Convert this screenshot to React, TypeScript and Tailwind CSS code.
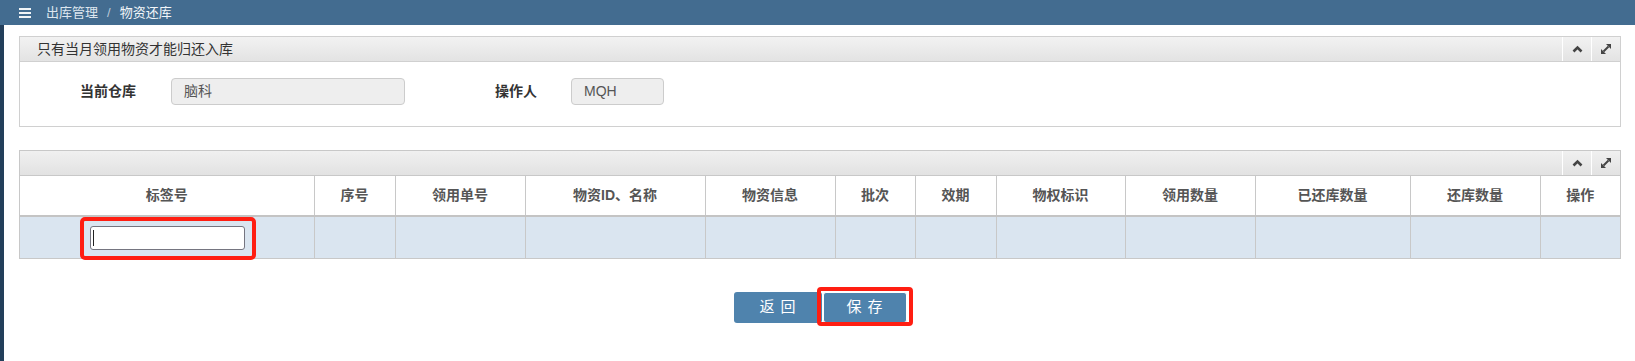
import React from "react";

const columns = [
  { title: "标签号", w: "w-[294px]" },
  { title: "序号", w: "w-[81px]" },
  { title: "领用单号", w: "w-[130px]" },
  { title: "物资ID、名称", w: "w-[180px]" },
  { title: "物资信息", w: "w-[130px]" },
  { title: "批次", w: "w-[80px]" },
  { title: "效期", w: "w-[81px]" },
  { title: "物权标识", w: "w-[129px]" },
  { title: "领用数量", w: "w-[130px]" },
  { title: "已还库数量", w: "w-[155px]" },
  { title: "还库数量", w: "w-[130px]" },
  { title: "操作", w: "w-[80px]" },
];

function PanelTools() {
  return (
    <div className="flex h-full">
      <button className="w-[29px] h-full border-l border-white flex items-center justify-center">
        <svg width="11" height="8" viewBox="0 0 11 8">
          <path d="M1.5 6.5 L5.5 2.5 L9.5 6.5" fill="none" stroke="#444" strokeWidth="2.6" />
        </svg>
      </button>
      <button className="w-[29px] h-full border-l border-white flex items-center justify-center">
        <svg width="12" height="12" viewBox="0 0 12 12">
          <path d="M3.5 8.5 L8.5 3.5" stroke="#444" strokeWidth="2" />
          <path d="M6 1 L11 1 L11 6 Z" fill="#444" />
          <path d="M1 6 L1 11 L6 11 Z" fill="#444" />
        </svg>
      </button>
    </div>
  );
}

export default function App() {
  return (
    <div className="min-h-screen w-full bg-white font-['Liberation_Sans','Noto_Sans_CJK_SC',sans-serif] text-[#333]">
      <header className="h-[25px] bg-[#436c90] flex items-center pl-[19px] text-[13px] leading-none text-[#dde6ee]">
        <div className="flex flex-col gap-[2px] w-[12px] mr-[15px]">
          <span className="h-[2px] bg-[#f0f4f7]" />
          <span className="h-[2px] bg-[#f0f4f7]" />
          <span className="h-[2px] bg-[#f0f4f7]" />
        </div>
        <span>出库管理</span>
        <span className="mx-[9px] text-[#b9c9d8]">/</span>
        <span className="text-[#f2f6f9]">物资还库</span>
      </header>

      <div className="flex min-h-[336px]">
        <div className="w-[4px] bg-[#233f5b]" />
        <main className="flex-1 pl-[15px] pr-[14px] pt-[11px]">
          {/* 提示面板 */}
          <section className="border border-[#d0d0d0]">
            <div className="h-[25px] flex items-center justify-between bg-gradient-to-b from-[#f2f2f2] to-[#e3e3e3] border-b border-[#d0d0d0]">
              <span className="pl-[17px] text-[14px] text-[#333]">只有当月领用物资才能归还入库</span>
              <PanelTools />
            </div>
            <div className="flex items-center pt-[16px] pb-[21px] pl-[60px] text-[14px]">
              <label className="font-bold w-[91px]">当前仓库</label>
              <div className="w-[234px] h-[27px] rounded-[4px] border border-[#ccc] bg-[#eee] px-[12px] flex items-center text-[#555]">
                脑科
              </div>
              <label className="font-bold ml-[90px] w-[76px]">操作人</label>
              <div className="w-[93px] h-[27px] rounded-[4px] border border-[#ccc] bg-[#eee] px-[12px] flex items-center text-[#555]">
                MQH
              </div>
            </div>
          </section>

          {/* 明细表格 */}
          <section className="mt-[23px] border border-[#c8c8c8]">
            <div className="h-[25px] flex justify-end bg-gradient-to-b from-[#f0f0f0] to-[#e2e2e2] border-b border-[#c8c8c8]">
              <PanelTools />
            </div>
            <table className="w-full table-fixed border-collapse text-[14px]">
              <colgroup>
                {columns.map((c) => (
                  <col key={c.title} className={c.w} />
                ))}
              </colgroup>
              <thead>
                <tr className="h-[40px] bg-white border-b-2 border-[#c4c4c4]">
                  {columns.map((c, i) => (
                    <th
                      key={c.title}
                      className={`font-bold text-[#555] text-center ${i > 0 ? "border-l border-[#c8c8c8]" : ""}`}
                    >
                      {c.title}
                    </th>
                  ))}
                </tr>
              </thead>
              <tbody>
                <tr className="h-[42px] bg-[#dae5f0]">
                  {columns.map((c, i) => (
                    <td key={c.title} className={i > 0 ? "border-l border-[#c8c8c8]" : ""}>
                      {i === 0 && (
                        <div className="relative ml-[70px] w-[155px] h-[24px]">
                          <input
                            className="w-full h-full rounded-[3px] border border-[#757580] bg-white outline-none"
                            defaultValue=""
                          />
                          <span className="absolute left-[3px] top-[4px] w-[1px] h-[16px] bg-[#222]" />
                          <span className="absolute -left-[10px] -right-[11px] -top-[9px] -bottom-[10px] rounded-[5px] border-[4px] border-[#ff1e12] pointer-events-none" />
                        </div>
                      )}
                    </td>
                  ))}
                </tr>
              </tbody>
            </table>
          </section>

          <div className="mt-[33px] flex justify-center">
            <button className="w-[88px] h-[31px] rounded-[3px] bg-[#4f83ad] text-white text-[15px] tracking-[6px] pl-[6px]">
              返回
            </button>
            <div className="relative ml-[1px]">
              <button className="w-[84px] h-[31px] rounded-[3px] bg-[#4f83ad] border border-white text-white text-[15px] tracking-[6px] pl-[6px]">
                保存
              </button>
              <span className="absolute -left-[6px] -right-[6px] -top-[5px] -bottom-[3px] rounded-[4px] border-[4px] border-[#ff1e12] pointer-events-none" />
            </div>
          </div>
        </main>
      </div>
    </div>
  );
}
